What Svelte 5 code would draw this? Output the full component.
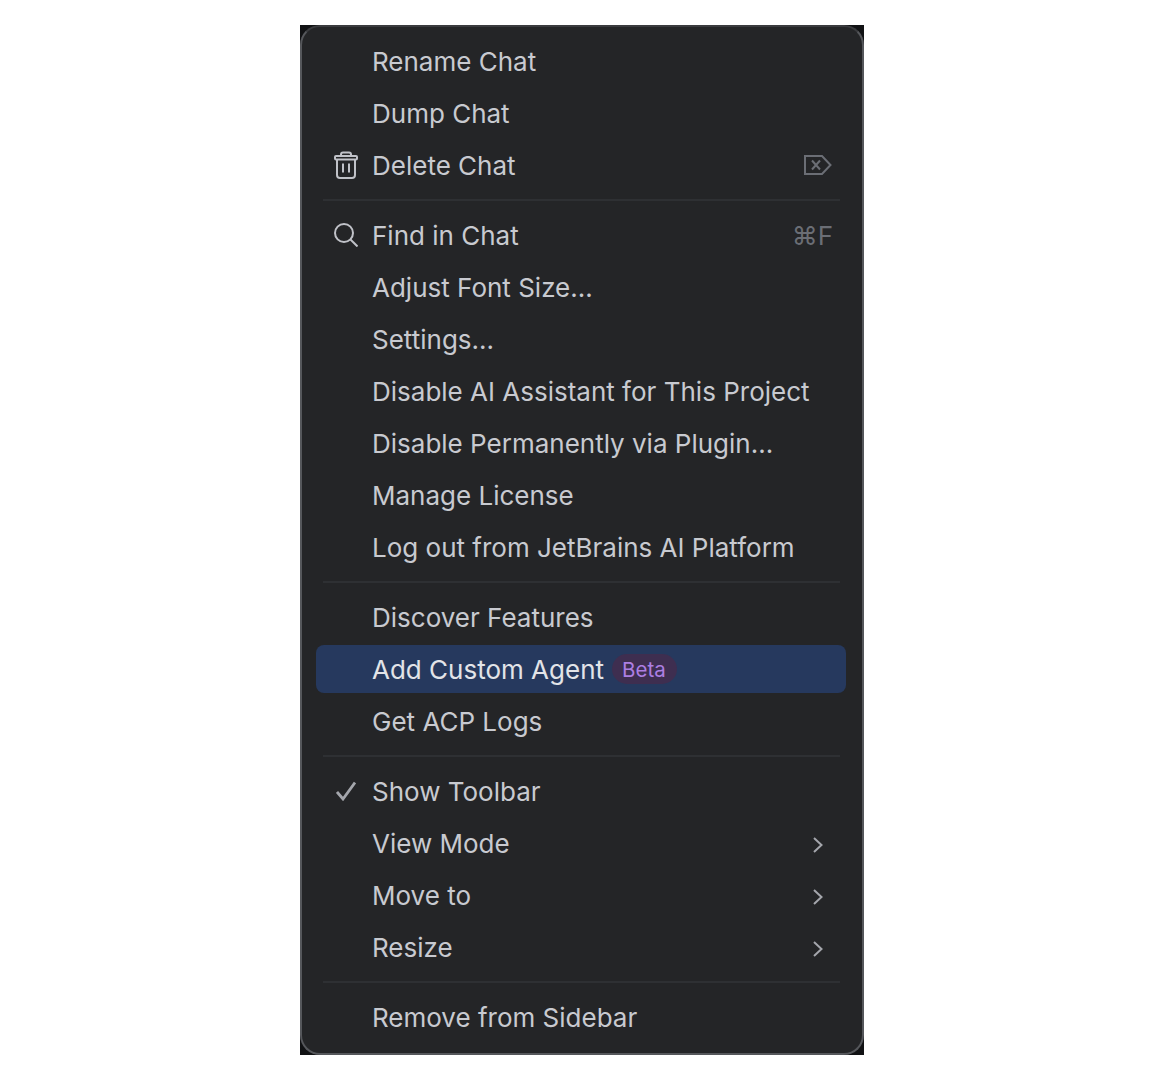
<script>
  const groups = [
    [
      { label: "Rename Chat" },
      { label: "Dump Chat" },
      { label: "Delete Chat", icon: "trash", shortcut: "delete" },
    ],
    [
      { label: "Find in Chat", icon: "search", shortcut: "⌘F" },
      { label: "Adjust Font Size..." },
      { label: "Settings..." },
      { label: "Disable AI Assistant for This Project" },
      { label: "Disable Permanently via Plugin..." },
      { label: "Manage License" },
      { label: "Log out from JetBrains AI Platform" },
    ],
    [
      { label: "Discover Features" },
      { label: "Add Custom Agent", badge: "Beta", selected: true },
      { label: "Get ACP Logs" },
    ],
    [
      { label: "Show Toolbar", icon: "check" },
      { label: "View Mode", submenu: true },
      { label: "Move to", submenu: true },
      { label: "Resize", submenu: true },
    ],
    [{ label: "Remove from Sidebar" }],
  ];
</script>

<div class="page">
  <div class="corners">
    <div class="menu" role="menu">
      {#each groups as group, i}
        {#if i > 0}
          <div class="separator"></div>
        {/if}
        {#each group as item}
          <div class="item" class:selected={item.selected} role="menuitem">
            <span class="icon">
              {#if item.icon === "trash"}
                <svg width="24" height="28" viewBox="0 0 24 28" fill="none" stroke="#c0c2c8" stroke-width="2">
                  <rect x="1" y="5" width="22" height="3.500" rx="1" />
                  <path d="M7 5V3.500C7 2.500 8 1.500 9 1.500h6c1 0 2 1 2 2V5" />
                  <path d="M3 8.500v15.500c0 1.700 1.300 3 3 3h12c1.700 0 3-1.300 3-3V8.500" />
                  <path d="M9 12.500v9M15 12.500v9" />
                </svg>
              {:else if item.icon === "search"}
                <svg width="24" height="24" viewBox="0 0 24 24" fill="none" stroke="#c0c2c8" stroke-width="2">
                  <circle cx="10" cy="10" r="9" />
                  <path d="M16.500 16.500L23.500 23.500" />
                </svg>
              {:else if item.icon === "check"}
                <svg class="check" width="20" height="20" viewBox="0 0 20 20" fill="none" stroke="#a4a6ac" stroke-width="2.800">
                  <path d="M1 11l6 7L19 1.500" />
                </svg>
              {/if}
            </span>
            <span class="label">{item.label}</span>
            {#if item.badge}
              <span class="badge">{item.badge}</span>
            {/if}
            {#if item.shortcut === "delete"}
              <svg class="shortcut-icon" width="28" height="20" viewBox="0 0 28 20" fill="none" stroke="#6b6e75" stroke-width="2">
                <path d="M1 1h17l8.500 9-8.500 9H1z" />
                <path d="M8 5.500l8 9M16 5.500l-8 9" />
              </svg>
            {:else if item.shortcut}
              <span class="shortcut">{item.shortcut}</span>
            {/if}
            {#if item.submenu}
              <svg class="chevron" width="10" height="16" viewBox="0 0 10 16" fill="none" stroke="#a4a6ac" stroke-width="2">
                <path d="M1 1l7.500 7L1 15" />
              </svg>
            {/if}
          </div>
        {/each}
      {/each}
    </div>
  </div>
</div>

<style>
  :global(body) {
    background: #fff;
  }

  .page {
    padding-top: 25px;
    display: flex;
    justify-content: center;
  }

  .corners {
    width: 564px;
    background: #111214;
  }

  .menu {
    padding: 6px 16px 8px 14px;
    background: #242527;
    border: 2px solid #55575b;
    border-top-color: #3a3b3e;
    border-radius: 20px;
    font-family: Inter, "Noto Sans", sans-serif;
    font-size: 26px;
    color: #c8cad0;
  }

  .item {
    height: 48px;
    margin: 4px 0;
    padding: 0 13px 0 18px;
    display: flex;
    align-items: center;
    border-radius: 8px;
  }

  .item.selected {
    background: #26395e;
    color: #e2e4e8;
  }

  .icon {
    width: 38px;
    height: 28px;
    flex: none;
    display: flex;
    align-items: center;
  }

  .check {
    margin-left: 2px;
  }

  .label {
    white-space: nowrap;
  }

  .badge {
    margin-left: 8px;
    padding: 0 11px 0 10px;
    height: 30px;
    display: flex;
    align-items: center;
    border-radius: 15px;
    background: #3e2e50;
    color: #ad7fe3;
    font-size: 20.500px;
  }

  .shortcut,
  .shortcut-icon,
  .chevron {
    margin-left: auto;
    flex: none;
  }

  .shortcut {
    color: #6b6e75;
  }

  .shortcut-icon {
    margin-right: 1px;
  }

  .chevron {
    margin-top: 4px;
    margin-right: 10px;
  }

  .separator {
    height: 2px;
    margin: 10px 6px 10px 7px;
    background: #2e3033;
  }
</style>
